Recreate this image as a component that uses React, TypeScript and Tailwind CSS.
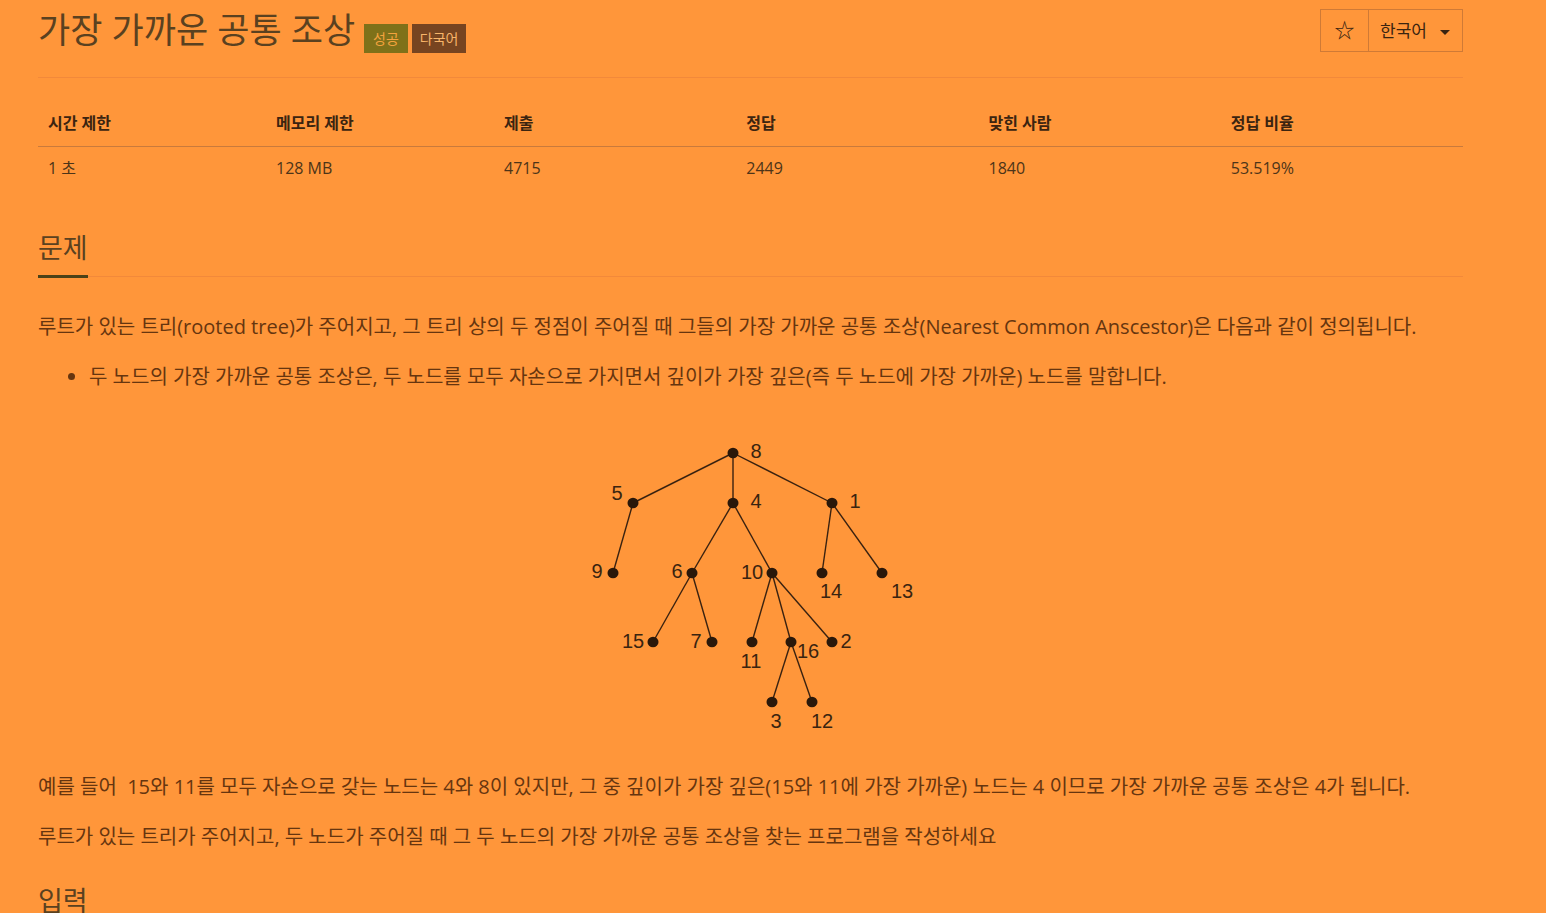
import React from "react";

const N: Record<string, [number, number]> = {
  n8: [732, 453],
  n5: [632, 503],
  n4: [732, 503],
  n1: [831, 503],
  n9: [612, 573],
  n6: [691, 573],
  n10: [771, 573],
  n14: [821, 573],
  n13: [881, 573],
  n15: [652, 642],
  n7: [711, 642],
  n11: [751, 642],
  n16: [790, 642],
  n2: [831, 642],
  n3: [771, 702],
  n12: [811, 702],
};
const edges: [string, string][] = [
  ["n8", "n5"], ["n8", "n4"], ["n8", "n1"],
  ["n5", "n9"], ["n4", "n6"], ["n4", "n10"],
  ["n1", "n14"], ["n1", "n13"], ["n6", "n15"], ["n6", "n7"],
  ["n10", "n11"], ["n10", "n16"], ["n10", "n2"], ["n16", "n3"], ["n16", "n12"],
];
const labels: [string, number, number][] = [
  ["8", 755, 458], ["5", 616, 500], ["4", 755, 508], ["1", 854, 508],
  ["9", 596, 578], ["6", 676, 578], ["10", 751, 579], ["14", 830, 598], ["13", 901, 598],
  ["15", 632, 648], ["7", 695, 648], ["11", 750, 668], ["16", 807, 658], ["2", 845, 648],
  ["3", 775, 728], ["12", 821, 728],
];

function Tree() {
  return (
    <svg width={340} height={300} viewBox="580 435 340 300" className="block mx-auto">
      {edges.map(([a, b], i) => (
        <line key={i} x1={N[a][0]} y1={N[a][1]} x2={N[b][0]} y2={N[b][1]} stroke="#3a2210" strokeWidth={1.4} />
      ))}
      {Object.entries(N).map(([k, [x, y]]) => (
        <ellipse key={k} cx={x} cy={y} rx={5.5} ry={5.2} fill="#2a180a" />
      ))}
      {labels.map(([t, x, y]) => (
        <text key={t} x={x} y={y} textAnchor="middle" fontSize={20} fill="#3a2410" fontFamily="'Liberation Sans', Arial, sans-serif">
          {t}
        </text>
      ))}
    </svg>
  );
}

export default function App() {
  const font = { fontFamily: "'Open Sans', 'Noto Sans CJK KR', sans-serif" };
  return (
    <div className="h-[913px] bg-[#ff963a] overflow-hidden" style={font}>
      <div className="ml-[38px] w-[1425px]">
        {/* header */}
        <div className="h-[78px] border-b border-[#f2893a] flex justify-between items-start">
          <div className="flex items-start mt-[10px]">
            <h1 className="text-[35px] leading-[40px] text-[#5a4120] font-normal">가장 가까운 공통 조상</h1>
            <span className="ml-[9px] mt-[14px] h-[29px] px-[9px] flex items-center bg-[#7f7119] text-[#f3a33e] text-[14px]">성공</span>
            <span className="ml-[4px] mt-[14px] h-[29px] px-[8px] flex items-center bg-[#774420] text-[#f8b56a] text-[14px]">다국어</span>
          </div>
          <div className="mt-[9px] h-[43px] flex border border-[#cf7a36] text-[#3a2410]">
            <div className="w-[48px] flex items-center justify-center border-r border-[#cf7a36] text-[20px]">☆</div>
            <div className="w-[93px] flex items-center pl-[11px] text-[17px]">
              <span>한국어</span>
              <span className="ml-[13px] mt-[3px] w-0 h-0 border-l-[5px] border-r-[5px] border-t-[5px] border-l-transparent border-r-transparent border-t-[#3a2410]" />
            </div>
          </div>
        </div>

        {/* table */}
        <table className="mt-[22px] w-full table-fixed border-collapse">
          <colgroup>
            <col className="w-[16%]" />
            <col className="w-[16%]" />
            <col className="w-[17%]" />
            <col className="w-[17%]" />
            <col className="w-[17%]" />
            <col className="w-[17%]" />
          </colgroup>
          <thead>
            <tr className="border-b border-[#c97a3c]">
              {["시간 제한", "메모리 제한", "제출", "정답", "맞힌 사람", "정답 비율"].map((h) => (
                <th key={h} className="text-left font-bold text-[16px] leading-[20px] pt-[13px] pb-[13px] pl-[10px] text-[#3b2410]">
                  {h}
                </th>
              ))}
            </tr>
          </thead>
          <tbody>
            <tr>
              {["1 초", "128 MB", "4715", "2449", "1840", "53.519%"].map((v) => (
                <td key={v} className="text-[16px] leading-[20px] pt-[11px] pb-[12px] pl-[10px] text-[#4d3418]">
                  {v}
                </td>
              ))}
            </tr>
          </tbody>
        </table>

        {/* section */}
        <div className="mt-[43px] border-b border-[#f2893a] leading-none">
          <h2 className="inline-block text-[27px] leading-[30px] font-normal text-[#5a4120] border-b-[3px] border-[#4b4218] pb-[12px] -mb-[2px]">문제</h2>
        </div>

        <div className="text-[20px] leading-[30px] text-[#66350f]">
          <p className="mt-[35px]">
            루트가 있는 트리(rooted tree)가 주어지고, 그 트리 상의 두 정점이 주어질 때 그들의 가장 가까운 공통 조상(Nearest Common Anscestor)은 다음과 같이 정의됩니다.
          </p>
          <ul className="mt-[20px] list-disc pl-[51px]">
            <li>두 노드의 가장 가까운 공통 조상은, 두 노드를 모두 자손으로 가지면서 깊이가 가장 깊은(즉 두 노드에 가장 가까운) 노드를 말합니다.</li>
          </ul>
          <div className="mt-[43px]">
            <Tree />
          </div>
          <p className="mt-[37px]">
            예를 들어&nbsp; 15와 11를 모두 자손으로 갖는 노드는 4와 8이 있지만, 그 중 깊이가 가장 깊은(15와 11에 가장 가까운) 노드는 4 이므로 가장 가까운 공통 조상은 4가 됩니다.
          </p>
          <p className="mt-[20px]">
            루트가 있는 트리가 주어지고, 두 노드가 주어질 때 그 두 노드의 가장 가까운 공통 조상을 찾는 프로그램을 작성하세요
          </p>
        </div>

        <div className="mt-[34px] border-b border-[#f2893a]">
          <h2 className="inline-block text-[27px] leading-[30px] font-normal text-[#5a4120] border-b-[3px] border-[#4b4218] pb-[12px] -mb-[2px]">입력</h2>
        </div>
      </div>
    </div>
  );
}
